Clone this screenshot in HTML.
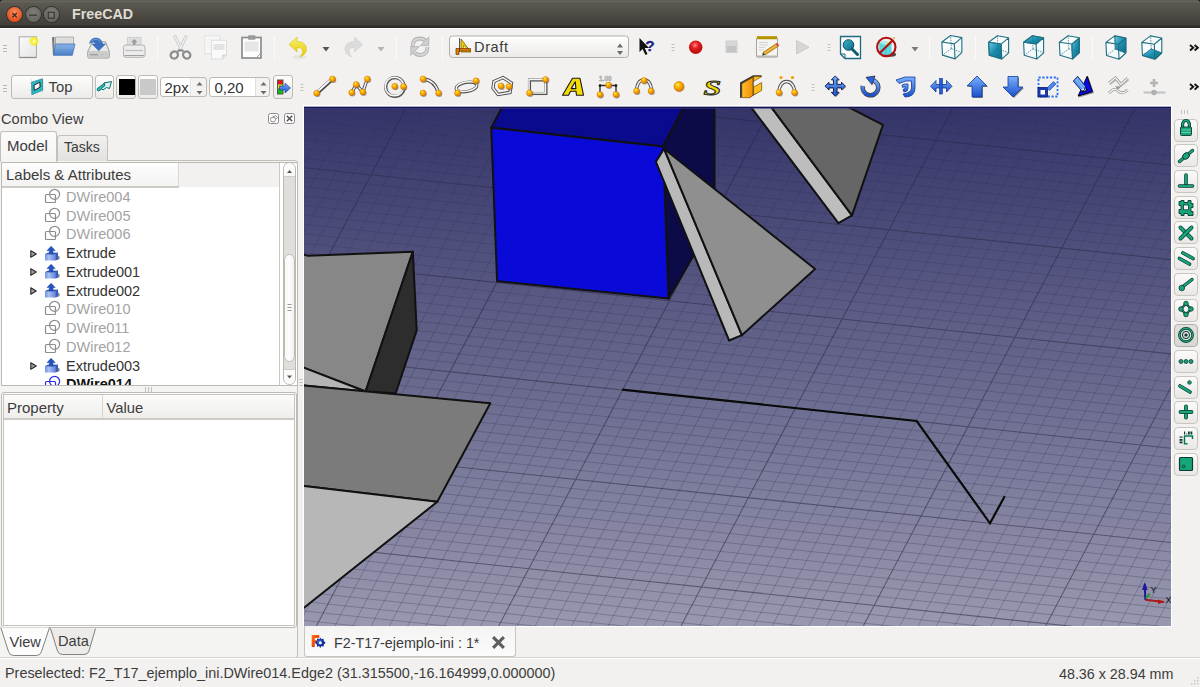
<!DOCTYPE html>
<html><head><meta charset="utf-8">
<style>
*{margin:0;padding:0;box-sizing:border-box}
html,body{width:1200px;height:687px;overflow:hidden;background:#f2f1f0;font-family:"Liberation Sans",sans-serif;color:#3c3c3c}
.a{position:absolute}
#title{left:0;top:0;width:1200px;height:28px;background:linear-gradient(#57554e 0px,#6a675d 1px,#5c5951 3px,#4e4b45 14px,#413f3a 25px,#302e2a 26px,#2c2a27 28px);border-top-left-radius:3px;border-top-right-radius:3px}
#titlewrap{left:0;top:0;width:1200px;height:8px;background:#061436}
.tt{font-weight:bold;font-size:14.3px;color:#dfdbd2;left:72px;top:6px;line-height:16px}
.wbtn{width:16px;height:16px;border-radius:50%;top:6.6px}
#vp{left:304px;top:107px;width:867px;height:519px;overflow:hidden}
.t{position:absolute;white-space:pre;font-size:14.5px;line-height:17px}
.ic{position:absolute;overflow:visible}
.sep{position:absolute;width:1px;background:#d9d6d2;border-right:1px solid #fbfbfa}
.grip{position:absolute;width:4px;height:9px;background:repeating-linear-gradient(#b9b5b0 0 1px,transparent 1px 3px)}
.btn{position:absolute;border:1px solid #bdb9b3;border-radius:3px;background:linear-gradient(#fdfdfc,#ecebe9)}
.gray{color:#9a9a9a}
</style></head><body>
<div class="a" id="titlewrap"></div>
<div class="a" id="title"></div>
<div class="a" style="left:0;top:28px;width:1200px;height:1px;background:#ffffff"></div>
<div class="a wbtn" style="left:7px;width:15.4px;height:15.4px;background:radial-gradient(circle at 50% 35%,#f58a5d,#e5521f 70%,#c8401a);box-shadow:0 0 0 1px #34332f"></div>
<div class="a wbtn" style="left:25.5px;width:15.2px;height:15.2px;background:radial-gradient(circle at 50% 35%,#7f7d77,#605e59);box-shadow:0 0 0 1px #34332f"></div>
<div class="a wbtn" style="left:43.7px;width:15.2px;height:15.2px;background:radial-gradient(circle at 50% 35%,#7f7d77,#605e59);box-shadow:0 0 0 1px #34332f"></div>
<svg class="ic" style="left:0;top:0.6px" width="60" height="28"><path d="M12.4 12l4.4 4.4M16.8 12l-4.4 4.4" stroke="#3a2a22" stroke-width="1.2"/><path d="M29.2 14.2h7.8" stroke="#3d3c38" stroke-width="1.4"/><rect x="48.3" y="11.3" width="6" height="6" fill="none" stroke="#3d3c38" stroke-width="1.3"/></svg>
<div class="a tt">FreeCAD</div>

<!-- row1 -->
<div class="grip" style="left:3px;top:44.5px"></div>
<svg class="ic" style="left:0;top:28px" width="1200" height="40" viewBox="0 28 1200 40">
<defs>
<linearGradient id="pg" x1="0" y1="0" x2="1" y2="1"><stop offset="0" stop-color="#fafafa"/><stop offset="1" stop-color="#e4e4e4"/></linearGradient>
<radialGradient id="yg"><stop offset="0" stop-color="#ffffff"/><stop offset="0.35" stop-color="#fbf54a"/><stop offset="0.7" stop-color="#f2ec10" stop-opacity="0.8"/><stop offset="1" stop-color="#f2ec10" stop-opacity="0"/></radialGradient>
<linearGradient id="bl" x1="0" y1="0" x2="0" y2="1"><stop offset="0" stop-color="#8ab4e6"/><stop offset="1" stop-color="#4a80c8"/></linearGradient>
<linearGradient id="yl" x1="0" y1="0" x2="0" y2="1"><stop offset="0" stop-color="#f8f070"/><stop offset="1" stop-color="#e2c800"/></linearGradient>
<linearGradient id="cb" x1="0" y1="0" x2="0" y2="1"><stop offset="0" stop-color="#ffffff"/><stop offset="1" stop-color="#ebeae8"/></linearGradient>
<radialGradient id="rd" cx="0.45" cy="0.35"><stop offset="0" stop-color="#ff8a8a"/><stop offset="0.5" stop-color="#e82020"/><stop offset="1" stop-color="#c01010"/></radialGradient>
<linearGradient id="tl" x1="0" y1="0" x2="1" y2="1"><stop offset="0" stop-color="#3fb0c8"/><stop offset="1" stop-color="#0c6e88"/></linearGradient>
</defs>
<!-- new -->
<rect x="19.2" y="36.8" width="17.3" height="20.6" fill="url(#pg)" stroke="#a9a9a9" stroke-width="1"/>
<path d="M19.5 57.5h17" stroke="#8c8c8c" stroke-width="1.2"/>
<circle cx="34" cy="41.2" r="5.2" fill="url(#yg)"/>
<!-- open -->
<path d="M52 38.5 Q51.5 37 53 37 L54.5 37 L54.5 55 L53 55.2z" fill="#7a7a7a"/>
<path d="M55.5 37 H73.5 V45 H55.5z" fill="#e9e9e9" stroke="#9a9a9a" stroke-width="0.8"/>
<path d="M56.5 39h16M56.5 41h16M56.5 43h16" stroke="#c4c4c4" stroke-width="0.7"/>
<path d="M55.5 44 H75 L72.3 55.3 H53.5z" fill="url(#bl)" stroke="#3f74b8" stroke-width="0.8"/>
<!-- save -->
<path d="M92.5 41.8 H105.5 L109.3 51.5 V56.8 Q109.3 58 108 58 H89 Q87.8 58 87.8 56.8 V51.5z" fill="#e9e9e9" stroke="#8f8f8f" stroke-width="0.9"/>
<path d="M88.3 51.8h20.5" stroke="#b0b0b0" stroke-width="0.8"/><rect x="88.5" y="52.3" width="20" height="5.2" fill="#c9c9c9"/><path d="M90 54.8h8" stroke="#8a8a8a" stroke-width="0.9"/>
<path d="M89.5 43.5 Q90.5 37.8 96.5 38 Q101.5 38.5 102.5 44 L105.5 44 L98.7 50.8 L92 44 L95.3 44 Q95 42 93.5 42 Q91.5 42 89.5 43.5z" fill="#3b70c2" stroke="#2c5ca8" stroke-width="0.5"/>
<path d="M90.5 42 Q92.5 39.2 96.5 39.3 Q99.5 39.6 100.5 42" stroke="#7aa6e0" stroke-width="0.8" fill="none"/>
<!-- print -->
<rect x="127.5" y="37.3" width="13.5" height="10" fill="#dedede" stroke="#c9c9c9" stroke-width="0.8"/>
<path d="M134.3 39 L137.5 42.3 H135.5 V45.5 H133 V42.3 H131z" fill="#9a9a9a"/>
<rect x="123.5" y="45" width="21.5" height="12.3" rx="2.5" fill="#ececec" stroke="#aaaaaa" stroke-width="0.9"/>
<path d="M125.5 50.5 H143" stroke="#bdbdbd" stroke-width="1.2"/><path d="M124.5 55.5 H144" stroke="#a0a0a0" stroke-width="1"/>
<!-- cut -->
<path d="M175 36.5 L181.8 50.5 M186 36.5 L179.2 50.5" stroke="#c8c8c8" stroke-width="3" stroke-linecap="round"/>
<path d="M175 36.5 L181.8 50.5 M186 36.5 L179.2 50.5" stroke="#f4f4f4" stroke-width="1.4" stroke-linecap="round"/>
<ellipse cx="174.3" cy="55" rx="3.8" ry="3.4" fill="none" stroke="#8c8c8c" stroke-width="2.2" transform="rotate(-35 174.3 55)"/>
<ellipse cx="186.7" cy="55" rx="3.8" ry="3.4" fill="none" stroke="#8c8c8c" stroke-width="2.2" transform="rotate(35 186.7 55)"/>
<path d="M177.5 51.5 Q180.5 48.5 183.5 51.5" stroke="#8c8c8c" stroke-width="2" fill="none"/>
<!-- copy -->
<rect x="204.8" y="35.8" width="15" height="18" fill="#f7f7f7" stroke="#dcdcdc" stroke-width="0.8"/>
<path d="M206.5 40h11M206.5 42.5h11M206.5 45h11M206.5 47.5h11" stroke="#ebebeb" stroke-width="0.8"/>
<path d="M211.5 40.3 H226.5 V55 L222.5 59 H211.5z" fill="#fafafa" stroke="#d7d7d7" stroke-width="0.8"/>
<rect x="213.5" y="44" width="11" height="6" fill="#e3e3e3"/><path d="M222.5 59 V55 H226.5" fill="#e0e0e0" stroke="#cfcfcf" stroke-width="0.7"/>
<!-- paste -->
<rect x="242" y="37.5" width="19" height="20.5" fill="#fdfdfd" stroke="#8c8c8c" stroke-width="1.7"/>
<rect x="248" y="35.3" width="7.5" height="4.5" rx="1" fill="#9a9a9a"/>
<rect x="244.5" y="41.5" width="14" height="10" fill="#e6e6e6"/><path d="M257 57 L260 54" stroke="#9a9a9a" stroke-width="1"/>
<!-- undo -->
<ellipse cx="299.5" cy="57" rx="7" ry="1.8" fill="#d8d8d8" opacity="0.5"/>
<path d="M289 44.5 L297 37 V41.5 Q306 41.5 306.5 49 Q306.5 54 300 57 Q303 53.5 302.5 50.5 Q302 47.5 297 47.5 V52z" fill="url(#yl)" stroke="#d9c40a" stroke-width="0.6"/>
<path d="M322.5 47 H329.5 L326 51.5z" fill="#555555"/>
<!-- redo -->
<path d="M362.5 44.5 L354.5 37 V41.5 Q345.5 41.5 345 49 Q345 54 351.5 57 Q348.5 53.5 349 50.5 Q349.5 47.5 354.5 47.5 V52z" fill="#dcdcdc" stroke="#cccccc" stroke-width="0.6"/>
<path d="M377.5 47 H384.5 L381 51.5z" fill="#b4b4b4"/>
<!-- refresh -->
<path d="M412.5 46.5 Q412.5 38.5 420 38.5 Q423.5 38.5 425.5 41" fill="none" stroke="#b0b0b0" stroke-width="3.8"/>
<path d="M412.5 46.5 Q412.5 38.5 420 38.5 Q423.5 38.5 425.5 41" fill="none" stroke="#d6d6d6" stroke-width="2"/>
<path d="M428.8 36.8 V45.6 H420.3z" fill="#cfcfcf" stroke="#acacac" stroke-width="0.7" stroke-linejoin="round"/>
<path d="M427.5 47 Q427.5 55 420 55 Q416.5 55 414.5 52.5" fill="none" stroke="#b0b0b0" stroke-width="3.8"/>
<path d="M427.5 47 Q427.5 55 420 55 Q416.5 55 414.5 52.5" fill="none" stroke="#d6d6d6" stroke-width="2"/>
<path d="M410.8 55.4 V46.6 H419.3z" fill="#cfcfcf" stroke="#acacac" stroke-width="0.7" stroke-linejoin="round"/>
<!-- combo -->
<rect x="449.5" y="36" width="179" height="21.5" rx="3" fill="url(#cb)" stroke="#b3afa9"/>
<path d="M617 47.5 L620 43.5 L623 47.5z M617 51 L620 55 L623 51z" fill="#6a6a6a"/>
<!-- draft icon -->
<path d="M461 39 V52 H471 z" fill="#f0d000" stroke="#7a6000" stroke-width="0.8"/>
<path d="M463.5 45 V49.5 H467.5z" fill="#f4f2e8" stroke="#7a6000" stroke-width="0.5"/>
<path d="M456 48.5 H470.5 V51 H459 V54.5 H456z" fill="#e87a00" stroke="#6a3800" stroke-width="0.7"/>
<path d="M459.5 38 V52" stroke="#333" stroke-width="0.8"/>
<!-- whats this -->
<path d="M639.5 38 V52 L642.5 49 L645.5 55 L647.5 54 L644.7 48 H649z" fill="#111"/>
<text x="645.3" y="50.5" font-family="Liberation Sans" font-weight="bold" font-size="15.5" fill="#1c2480" stroke="#1c2480" stroke-width="0.3">?</text>
<path d="M671.5 44.5h3M671.5 47.5h3M671.5 50.5h3" stroke="#c4c0bb" stroke-width="1"/>
<!-- macro rec -->
<circle cx="695.7" cy="47.2" r="6.7" fill="url(#rd)"/>
<rect x="726" y="41" width="11" height="11.5" fill="#d8d8d8" stroke="#c6c6c6" stroke-width="0.8"/><rect x="727" y="46" width="9" height="6" fill="#c4c4c4"/>
<!-- macro edit -->
<rect x="756.5" y="37.5" width="21" height="19.5" rx="1" fill="#f6f6f0" stroke="#9b9b9b" stroke-width="0.9"/>
<rect x="757" y="36.2" width="20" height="3" fill="#c8a400"/><path d="M758 36.2v3M760 36.2v3M762 36.2v3M764 36.2v3M766 36.2v3M768 36.2v3M770 36.2v3M772 36.2v3M774 36.2v3M776 36.2v3" stroke="#8a7000" stroke-width="0.6"/>
<path d="M759 42.5h9M759 45h9M759 47.5h6M759 50h5" stroke="#c8c8c8" stroke-width="0.8"/>
<path d="M763 52.5 L776.5 43.5 L778.5 46 L765 55z" fill="#f0b030" stroke="#6a4a00" stroke-width="0.6"/><path d="M763 52.5 L762 56 L765 55z" fill="#333"/><path d="M776.5 43.5 L778.5 46" stroke="#e04040" stroke-width="2"/>
<rect x="756.5" y="55.5" width="21" height="2" fill="#b8b8b8"/>
<!-- play -->
<path d="M796.5 40.5 V54 L809 47.2z" fill="#d6d6d6" stroke="#c4c4c4" stroke-width="0.8"/>
<path d="M827.5 44.5h3M827.5 47.5h3M827.5 50.5h3" stroke="#c4c0bb" stroke-width="1"/>
<!-- fit all -->
<path d="M840.5 36.5 H860.5 V58.5 H845 L840.5 54z" fill="#fbfbfb" stroke="#1d6b80" stroke-width="1.3"/>
<path d="M845 58.5 V54 H840.5" fill="none" stroke="#1d6b80" stroke-width="1"/>
<circle cx="848.5" cy="45" r="5.3" fill="url(#tl)" stroke="#0e4f60" stroke-width="1"/>
<path d="M852 49 L857.5 54.5" stroke="#0e5a70" stroke-width="3" stroke-linecap="round"/>
<!-- no draw -->
<ellipse cx="891" cy="54.5" rx="5" ry="2.2" fill="#222" opacity="0.8"/>
<path d="M879 43 L884 41 L891.5 43 V54.5 L885 56.5 L879.5 52z" fill="#5ad8e0"/>
<path d="M879 43 L884 41 L891.5 43 L886 45z" fill="#a8eef0"/><path d="M886 45 V56.5" stroke="#3ab8c4" stroke-width="0.6"/>
<path d="M885.5 46.5 L892.3 40.2" stroke="#f0d000" stroke-width="1.8"/><circle cx="894.2" cy="37.9" r="0.9" fill="#e0a040"/>
<circle cx="886.3" cy="46.9" r="9.2" fill="none" stroke="#b01010" stroke-width="2.1"/>
<path d="M879.8 53 L892.6 40.6" stroke="#b01010" stroke-width="2.1"/>
<path d="M911.5 47 H918.5 L915 51.5z" fill="#7a7a7a"/>
<defs><linearGradient id="cf" x1="0" y1="0" x2="1" y2="1"><stop offset="0" stop-color="#6ccbe4"/><stop offset="0.5" stop-color="#1b8fae"/><stop offset="1" stop-color="#0b6d88"/></linearGradient><linearGradient id="cw" x1="0" y1="0" x2="1" y2="1"><stop offset="0" stop-color="#ffffff"/><stop offset="1" stop-color="#eef6f8"/></linearGradient></defs>
<path d="M941.85 42.00 L950.65 35.50 L961.85 37.60 L961.85 52.60 L955.00 58.85 L942.50 55.10 z" fill="url(#cw)"/>
<path d="M951.30 48.60 L950.65 35.50 M951.30 48.60 L942.50 55.10 M951.30 48.60 L961.85 52.60" stroke="#1f6f80" stroke-width="0.7" stroke-dasharray="1.5 1" fill="none"/>
<path d="M941.85 42.00 L954.35 43.85 L961.85 37.60 L950.65 35.50 z M941.85 42.00 L942.50 55.10 L955.00 58.85 L961.85 52.60 M954.35 43.85 L955.00 58.85 M961.85 37.60 L961.85 52.60" stroke="#1f6f80" stroke-width="1.1" fill="none" stroke-linejoin="round"/>
<path d="M988.60 42.20 L997.40 35.70 L1008.60 37.80 L1008.60 52.80 L1001.75 59.05 L989.25 55.30 z" fill="url(#cw)"/>
<path d="M988.60 42.20 L1001.10 44.05 L1001.75 59.05 L989.25 55.30 z" fill="url(#cf)" stroke="#1f6f80" stroke-width="0.8"/>
<path d="M998.05 48.80 L997.40 35.70 M998.05 48.80 L989.25 55.30 M998.05 48.80 L1008.60 52.80" stroke="#1f6f80" stroke-width="0.7" stroke-dasharray="1.5 1" fill="none"/>
<path d="M988.60 42.20 L1001.10 44.05 L1008.60 37.80 L997.40 35.70 z M988.60 42.20 L989.25 55.30 L1001.75 59.05 L1008.60 52.80 M1001.10 44.05 L1001.75 59.05 M1008.60 37.80 L1008.60 52.80" stroke="#1f6f80" stroke-width="1.1" fill="none" stroke-linejoin="round"/>
<path d="M1023.60 42.20 L1032.40 35.70 L1043.60 37.80 L1043.60 52.80 L1036.75 59.05 L1024.25 55.30 z" fill="url(#cw)"/>
<path d="M1023.60 42.20 L1036.10 44.05 L1043.60 37.80 L1032.40 35.70 z" fill="url(#cf)" stroke="#1f6f80" stroke-width="0.8"/>
<path d="M1033.05 48.80 L1032.40 35.70 M1033.05 48.80 L1024.25 55.30 M1033.05 48.80 L1043.60 52.80" stroke="#1f6f80" stroke-width="0.7" stroke-dasharray="1.5 1" fill="none"/>
<path d="M1023.60 42.20 L1036.10 44.05 L1043.60 37.80 L1032.40 35.70 z M1023.60 42.20 L1024.25 55.30 L1036.75 59.05 L1043.60 52.80 M1036.10 44.05 L1036.75 59.05 M1043.60 37.80 L1043.60 52.80" stroke="#1f6f80" stroke-width="1.1" fill="none" stroke-linejoin="round"/>
<path d="M1059.35 42.20 L1068.15 35.70 L1079.35 37.80 L1079.35 52.80 L1072.50 59.05 L1060.00 55.30 z" fill="url(#cw)"/>
<path d="M1071.85 44.05 L1079.35 37.80 L1079.35 52.80 L1072.50 59.05 z" fill="url(#cf)" stroke="#1f6f80" stroke-width="0.8"/>
<path d="M1068.80 48.80 L1068.15 35.70 M1068.80 48.80 L1060.00 55.30 M1068.80 48.80 L1079.35 52.80" stroke="#1f6f80" stroke-width="0.7" stroke-dasharray="1.5 1" fill="none"/>
<path d="M1059.35 42.20 L1071.85 44.05 L1079.35 37.80 L1068.15 35.70 z M1059.35 42.20 L1060.00 55.30 L1072.50 59.05 L1079.35 52.80 M1071.85 44.05 L1072.50 59.05 M1079.35 37.80 L1079.35 52.80" stroke="#1f6f80" stroke-width="1.1" fill="none" stroke-linejoin="round"/>
<path d="M1105.90 42.40 L1114.70 35.90 L1125.90 38.00 L1125.90 53.00 L1119.05 59.25 L1106.55 55.50 z" fill="url(#cw)"/>
<path d="M1114.70 35.90 L1125.90 38.00 L1125.90 53.00 L1115.35 49.00 z" fill="url(#cf)" stroke="#1f6f80" stroke-width="0.8"/>
<path d="M1115.35 49.00 L1114.70 35.90 M1115.35 49.00 L1106.55 55.50 M1115.35 49.00 L1125.90 53.00" stroke="#1f6f80" stroke-width="0.7" stroke-dasharray="1.5 1" fill="none"/>
<path d="M1105.90 42.40 L1118.40 44.25 L1125.90 38.00 L1114.70 35.90 z M1105.90 42.40 L1106.55 55.50 L1119.05 59.25 L1125.90 53.00 M1118.40 44.25 L1119.05 59.25 M1125.90 38.00 L1125.90 53.00" stroke="#1f6f80" stroke-width="1.1" fill="none" stroke-linejoin="round"/>
<path d="M1141.80 42.40 L1150.60 35.90 L1161.80 38.00 L1161.80 53.00 L1154.95 59.25 L1142.45 55.50 z" fill="url(#cw)"/>
<path d="M1142.45 55.50 L1154.95 59.25 L1161.80 53.00 L1151.25 49.00 z" fill="url(#cf)" stroke="#1f6f80" stroke-width="0.8"/>
<path d="M1151.25 49.00 L1150.60 35.90 M1151.25 49.00 L1142.45 55.50 M1151.25 49.00 L1161.80 53.00" stroke="#1f6f80" stroke-width="0.7" stroke-dasharray="1.5 1" fill="none"/>
<path d="M1141.80 42.40 L1154.30 44.25 L1161.80 38.00 L1150.60 35.90 z M1141.80 42.40 L1142.45 55.50 L1154.95 59.25 L1161.80 53.00 M1154.30 44.25 L1154.95 59.25 M1161.80 38.00 L1161.80 53.00" stroke="#1f6f80" stroke-width="1.1" fill="none" stroke-linejoin="round"/>
<path d="M1190 45.1 L1193.2 47.8 L1190 50.5 M1194.6 45.1 L1197.8 47.8 L1194.6 50.5" stroke="#111" stroke-width="1.9" fill="none"/>
</svg>
<div class="sep" style="left:157px;top:36px;height:23px"></div>
<div class="sep" style="left:274px;top:36px;height:23px"></div>
<div class="sep" style="left:396px;top:36px;height:23px"></div>
<div class="sep" style="left:442px;top:36px;height:23px"></div>
<div class="sep" style="left:929px;top:36px;height:23px"></div>
<div class="sep" style="left:975px;top:36px;height:23px"></div>
<div class="sep" style="left:1092px;top:36px;height:23px"></div>
<div class="t" style="left:474px;top:39px;font-size:14.6px;letter-spacing:0.6px;color:#3c3c3c">Draft</div>
<!-- row2 -->
<div class="grip" style="left:3px;top:84.5px"></div>
<div class="btn" style="left:11px;top:75px;width:82px;height:24px"></div>
<div class="t" style="left:48.5px;top:78.5px;font-size:14.8px">Top</div>
<div class="btn" style="left:95px;top:75px;width:19px;height:24px"></div>
<div class="btn" style="left:116px;top:75px;width:20px;height:24px"></div>
<div class="a" style="left:118.5px;top:79px;width:16px;height:16px;background:#000"></div>
<div class="btn" style="left:138px;top:75px;width:20px;height:24px"></div>
<div class="a" style="left:140px;top:79px;width:16px;height:16px;background:#c9c9c9"></div>
<div class="a" style="left:160px;top:77px;width:47px;height:20px;border:1px solid #bdb9b3;border-radius:3px;background:linear-gradient(90deg,#fff 0,#fff 30px,#f3f2f1 31px)"></div>
<div class="a" style="left:190px;top:78px;width:1px;height:18px;background:#e3e1de"></div>
<div class="t" style="left:164.5px;top:79px;font-size:15px;color:#333">2px</div>
<div class="a" style="left:209px;top:77px;width:61px;height:20px;border:1px solid #bdb9b3;border-radius:3px;background:linear-gradient(90deg,#fff 0,#fff 45px,#f3f2f1 46px)"></div>
<div class="a" style="left:255px;top:78px;width:1px;height:18px;background:#e3e1de"></div>
<div class="t" style="left:214.5px;top:79px;font-size:15px;color:#333">0,20</div>
<div class="btn" style="left:273px;top:75px;width:20px;height:24px"></div>
<svg class="ic" style="left:0;top:68px" width="1200" height="40" viewBox="0 68 1200 40">
<defs>
<radialGradient id="od" cx="0.38" cy="0.32" r="0.7"><stop offset="0" stop-color="#fff2b0"/><stop offset="0.25" stop-color="#ffc400"/><stop offset="1" stop-color="#e07800"/></radialGradient>
<linearGradient id="ab" x1="0" y1="0" x2="0" y2="1"><stop offset="0" stop-color="#7ab0ff"/><stop offset="1" stop-color="#1a50c8"/></linearGradient>
<linearGradient id="og" x1="0" y1="0" x2="1" y2="0"><stop offset="0" stop-color="#ffbb30"/><stop offset="1" stop-color="#f09000"/></linearGradient>

</defs>
<path d="M196.5 85.5 L199.5 82 L202.5 85.5z M196.5 91 L199.5 94.5 L202.5 91z" fill="#6a6a6a"/>
<path d="M260.5 85.5 L263.5 82 L266.5 85.5z M260.5 91 L263.5 94.5 L266.5 91z" fill="#6a6a6a"/>
<!-- top view icon -->
<path d="M31.5 79v16M42.5 79v14M29 83h15M29 90h15" stroke="#c6d6d8" stroke-width="0.6"/>
<path d="M31.6 82.2 L42.6 78.8 L42.6 90.3 L31.9 94.6z M34 85.3 L39.8 82.1 L40.1 87.2 L34.3 90.4z" fill-rule="evenodd" fill="#2ab8c4" stroke="#1a7e8a" stroke-width="0.7"/>
<path d="M34 85.3 L39.8 82.1 L40.1 87.2 L34.3 90.4z" fill="#f6f6f6" stroke="#111" stroke-width="0.9"/>
<!-- construction -->
<path d="M98.5 89.5 L105 84.5" stroke="#0a7a7a" stroke-width="3.6" stroke-linecap="round"/>
<path d="M98.5 89.5 L105 84.5" stroke="#2ec0b8" stroke-width="1.8" stroke-linecap="round"/>
<path d="M104 83 L111.5 81.5 L109.5 88.5 L106.5 87.5 L103 90 L101.5 88.5 L105 85.5z" fill="#d8f4f0" stroke="#0a6a6a" stroke-width="1"/>
<!-- apply style -->
<rect x="277" y="79.5" width="6.5" height="15" fill="#555"/>
<rect x="278" y="80.5" width="4.5" height="3.5" fill="#f01010"/><rect x="278" y="84.5" width="4.5" height="4" fill="#f0e000"/><rect x="278" y="89" width="4.5" height="4.5" fill="#10c010"/>
<path d="M279.5 86 H285 V83 L290.5 88 L285 93 V90 H279.5z" fill="url(#ab)" stroke="#1a3a90" stroke-width="0.6"/>
<path d="M300.5 84.5h3M300.5 87.5h3M300.5 90.5h3" stroke="#c4c0bb" stroke-width="1"/>
<!-- line -->
<path d="M317 93 L332.5 79" stroke="#4a4a4a" stroke-width="3.8"/><path d="M316.5 92.5 L332 78.5" stroke="#fafafa" stroke-width="1.8"/>
<circle cx="317.5" cy="94.1" r="3" fill="#555" opacity="0.55"/><circle cx="316.7" cy="93.2" r="3" fill="url(#od)" stroke="#c87000" stroke-width="0.4"/><circle cx="333.3" cy="79.9" r="3" fill="#555" opacity="0.55"/><circle cx="332.5" cy="79.0" r="3" fill="url(#od)" stroke="#c87000" stroke-width="0.4"/>
<!-- wire -->
<path d="M351.7 92.5 L356.2 84.5 L362.8 92 L367.3 79" stroke="#4a4a4a" stroke-width="3.3" fill="none"/><path d="M351.7 92.5 L356.2 84.5 L362.8 92 L367.3 79" stroke="#f6f6f6" stroke-width="1.5" fill="none"/>
<circle cx="352.5" cy="93.4" r="3" fill="#555" opacity="0.55"/><circle cx="351.7" cy="92.5" r="3" fill="url(#od)" stroke="#c87000" stroke-width="0.4"/><circle cx="357.0" cy="85.4" r="3" fill="#555" opacity="0.55"/><circle cx="356.2" cy="84.5" r="3" fill="url(#od)" stroke="#c87000" stroke-width="0.4"/><circle cx="363.6" cy="92.9" r="3" fill="#555" opacity="0.55"/><circle cx="362.8" cy="92.0" r="3" fill="url(#od)" stroke="#c87000" stroke-width="0.4"/><circle cx="368.1" cy="79.9" r="3" fill="#555" opacity="0.55"/><circle cx="367.3" cy="79.0" r="3" fill="url(#od)" stroke="#c87000" stroke-width="0.4"/>
<!-- circle -->
<circle cx="395" cy="87" r="9.3" fill="none" stroke="#555" stroke-width="3.2"/><circle cx="394.5" cy="86.5" r="9.3" fill="none" stroke="#fafafa" stroke-width="1.6"/>
<circle cx="395.5" cy="87.2" r="3" fill="#555" opacity="0.55"/><circle cx="394.7" cy="86.3" r="3" fill="url(#od)" stroke="#c87000" stroke-width="0.4"/><circle cx="404.3" cy="87.4" r="3" fill="#555" opacity="0.55"/><circle cx="403.5" cy="86.5" r="3" fill="url(#od)" stroke="#c87000" stroke-width="0.4"/>
<!-- arc -->
<path d="M423 79 Q435 80 438.5 93" stroke="#4a4a4a" stroke-width="3.3" fill="none"/><path d="M423 79 Q435 80 438.5 93" stroke="#f6f6f6" stroke-width="1.5" fill="none"/>
<circle cx="423.8" cy="79.9" r="3" fill="#555" opacity="0.55"/><circle cx="423.0" cy="79.0" r="3" fill="url(#od)" stroke="#c87000" stroke-width="0.4"/><circle cx="423.8" cy="93.9" r="3" fill="#555" opacity="0.55"/><circle cx="423.0" cy="93.0" r="3" fill="url(#od)" stroke="#c87000" stroke-width="0.4"/><circle cx="439.3" cy="93.9" r="3" fill="#555" opacity="0.55"/><circle cx="438.5" cy="93.0" r="3" fill="url(#od)" stroke="#c87000" stroke-width="0.4"/>
<!-- ellipse -->
<ellipse cx="466.5" cy="87" rx="10.5" ry="4.6" fill="none" stroke="#555" stroke-width="3.1" transform="rotate(-10 466.5 87)"/><ellipse cx="466.5" cy="86.6" rx="10.5" ry="4.6" fill="none" stroke="#fafafa" stroke-width="1.5" transform="rotate(-10 466.5 86.6)"/>
<circle cx="476.8" cy="81.7" r="3" fill="#555" opacity="0.55"/><circle cx="476.0" cy="80.8" r="3" fill="url(#od)" stroke="#c87000" stroke-width="0.4"/><circle cx="458.3" cy="93.9" r="3" fill="#555" opacity="0.55"/><circle cx="457.5" cy="93.0" r="3" fill="url(#od)" stroke="#c87000" stroke-width="0.4"/>
<!-- polygon -->
<path d="M494 81.5 L503 77.5 L511.5 83 L510 92.5 L498 94.5 L493 88z" fill="none" stroke="#4a4a4a" stroke-width="3.3"/><path d="M494 81.5 L503 77.5 L511.5 83 L510 92.5 L498 94.5 L493 88z" fill="none" stroke="#f6f6f6" stroke-width="1.5"/>
<circle cx="501.8" cy="86.9" r="3" fill="#555" opacity="0.55"/><circle cx="501.0" cy="86.0" r="3" fill="url(#od)" stroke="#c87000" stroke-width="0.4"/><circle cx="509.8" cy="87.4" r="3" fill="#555" opacity="0.55"/><circle cx="509.0" cy="86.5" r="3" fill="url(#od)" stroke="#c87000" stroke-width="0.4"/>
<!-- rectangle -->
<rect x="529.5" y="80" width="16.5" height="13.5" fill="none" stroke="#555" stroke-width="3.1"/><rect x="529" y="79.5" width="16.5" height="13.5" fill="none" stroke="#f6f6f6" stroke-width="1.5"/>
<circle cx="546.3" cy="80.4" r="3" fill="#555" opacity="0.55"/><circle cx="545.5" cy="79.5" r="3" fill="url(#od)" stroke="#c87000" stroke-width="0.4"/><circle cx="530.3" cy="93.9" r="3" fill="#555" opacity="0.55"/><circle cx="529.5" cy="93.0" r="3" fill="url(#od)" stroke="#c87000" stroke-width="0.4"/>
<!-- text A -->
<path d="M562.5 95.2 L572.5 78.3 H580 L583.5 95.2 H576.5 L576 91.2 H570.5 L568.5 95.2z M571.2 88.6 L575.3 81.8 L575.9 88.6z" fill-rule="evenodd" fill="#f6dc00" stroke="#1a1a1a" stroke-width="1.1" stroke-linejoin="round"/>
<!-- dimension -->
<text x="599" y="80.5" font-family="Liberation Sans" font-weight="bold" font-size="6.5" fill="#fff" stroke="#999" stroke-width="0.5">1.00</text>
<path d="M600 85.5 H616 M600 85.5 V94 M616 85.5 V94" stroke="#333" stroke-width="1.4" fill="none"/>
<circle cx="600" cy="85.5" r="1.3" fill="#111"/><circle cx="616" cy="85.5" r="1.3" fill="#111"/>
<circle cx="609.3" cy="85.9" r="3" fill="#555" opacity="0.55"/><circle cx="608.5" cy="85.0" r="3" fill="url(#od)" stroke="#c87000" stroke-width="0.4"/><circle cx="600.8" cy="95.4" r="3" fill="#555" opacity="0.55"/><circle cx="600.0" cy="94.5" r="3" fill="url(#od)" stroke="#c87000" stroke-width="0.4"/><circle cx="616.8" cy="95.4" r="3" fill="#555" opacity="0.55"/><circle cx="616.0" cy="94.5" r="3" fill="url(#od)" stroke="#c87000" stroke-width="0.4"/>
<!-- bspline -->
<path d="M636.5 91 Q637 80 644 80 Q651 80 651.5 91" stroke="#555" stroke-width="3.3" fill="none"/><path d="M636.5 91 Q637 80 644 80 Q651 80 651.5 91" stroke="#f6f6f6" stroke-width="1.5" fill="none"/>
<circle cx="644.8" cy="81.4" r="3" fill="#555" opacity="0.55"/><circle cx="644.0" cy="80.5" r="3" fill="url(#od)" stroke="#c87000" stroke-width="0.4"/><circle cx="637.3" cy="91.9" r="3" fill="#555" opacity="0.55"/><circle cx="636.5" cy="91.0" r="3" fill="url(#od)" stroke="#c87000" stroke-width="0.4"/><circle cx="651.8" cy="91.9" r="3" fill="#555" opacity="0.55"/><circle cx="651.0" cy="91.0" r="3" fill="url(#od)" stroke="#c87000" stroke-width="0.4"/>
<!-- point -->
<circle cx="679.5" cy="87" r="5" fill="#666" opacity="0.5"/><circle cx="679" cy="86.5" r="5" fill="url(#od)" stroke="#c87000" stroke-width="0.5"/>
<!-- shapestring S -->
<text transform="translate(703.5,95) scale(1.45,1)" font-family="Liberation Serif" font-weight="bold" font-style="italic" font-size="22" fill="#f2da00" stroke="#2a2a2a" stroke-width="0.9" stroke-linejoin="round">S</text>
<!-- facebinder -->
<path d="M740 82.6 L753.1 75.3 H761.7 L761.7 76.5 L753.6 81 V87 L761.7 82.6 V90.4 L749.9 97.7 H740z" fill="#3a3a3a"/>
<path d="M741.9 83.8 L752.9 77.3 V94.9 L749.9 97.7 H741.9z" fill="url(#og)" stroke="#6a4200" stroke-width="0.5"/>
<path d="M753.6 76.6 H761.7 L753.6 81.4z" fill="#ffc020" stroke="#6a4200" stroke-width="0.5"/>
<path d="M753.6 87.1 L761.7 82.6 V90.4 L753.6 94.9z" fill="#ffc020" stroke="#6a4200" stroke-width="0.5"/>
<!-- bezier -->
<path d="M778.5 93 Q780 81.5 786.5 81.5 Q793.5 81.5 795 93" stroke="#4a4a4a" stroke-width="3.3" fill="none"/><path d="M778.5 93 Q780 81.5 786.5 81.5 Q793.5 81.5 795 93" stroke="#f6f6f6" stroke-width="1.5" fill="none"/>
<circle cx="781" cy="77.5" r="1.6" fill="#f0a000"/><circle cx="792.5" cy="77.5" r="1.6" fill="#f0a000"/>
<circle cx="779.8" cy="93.4" r="3" fill="#555" opacity="0.55"/><circle cx="779.0" cy="92.5" r="3" fill="url(#od)" stroke="#c87000" stroke-width="0.4"/><circle cx="795.3" cy="93.4" r="3" fill="#555" opacity="0.55"/><circle cx="794.5" cy="92.5" r="3" fill="url(#od)" stroke="#c87000" stroke-width="0.4"/>
<path d="M811.5 84.5h3M811.5 87.5h3M811.5 90.5h3" stroke="#c4c0bb" stroke-width="1"/>
<!-- move -->
<path d="M835.2 75.9 L839.1 79.8 L836.9 79.8 L836.9 84.4 L841.5 84.4 L841.5 82.2 L845.4 86.1 L841.5 90.0 L841.5 87.8 L836.9 87.8 L836.9 92.4 L839.1 92.4 L835.2 96.3 L831.3 92.4 L833.5 92.4 L833.5 87.8 L828.9 87.8 L828.9 90.0 L825.0 86.1 L828.9 82.2 L828.9 84.4 L833.5 84.4 L833.5 79.8 L831.3 79.8z" fill="#333" opacity="0.4" transform="translate(0.8,0.8)"/><path d="M835.2 75.9 L839.1 79.8 L836.9 79.8 L836.9 84.4 L841.5 84.4 L841.5 82.2 L845.4 86.1 L841.5 90.0 L841.5 87.8 L836.9 87.8 L836.9 92.4 L839.1 92.4 L835.2 96.3 L831.3 92.4 L833.5 92.4 L833.5 87.8 L828.9 87.8 L828.9 90.0 L825.0 86.1 L828.9 82.2 L828.9 84.4 L833.5 84.4 L833.5 79.8 L831.3 79.8z" fill="url(#ab)" stroke="#0a1a50" stroke-width="0.9" stroke-linejoin="miter"/>
<!-- rotate -->
<path d="M862.8 86 A7.8 7.8 0 1 0 873.5 80.3" fill="none" stroke="#222" stroke-width="4.6" opacity="0.85"/>
<path d="M862.8 86 A7.8 7.8 0 1 0 873.5 80.3" fill="none" stroke="url(#ab)" stroke-width="3"/>
<path d="M866 77.3 L875 76 L872 84.8z" fill="#2a62e0" stroke="#111" stroke-width="0.6" stroke-linejoin="round"/>
<!-- offset -->
<path d="M896 80 L905 77 H915 V88.5 Q914.5 97 905 97 L903 94 Q911 93 911.5 88 V81 H906 L899 83.5z" fill="url(#ab)" stroke="#103a9a" stroke-width="0.8"/>
<path d="M902 85 Q905 83.5 908 84 V88.5 Q908 91.5 904 92 L903 89.5 Q905 89 905 87.5 V86.5 L902.5 87.5z" fill="url(#ab)" stroke="#103a9a" stroke-width="0.8"/>
<!-- trimex -->
<path d="M930.5 86.3 L936 80.5 V84.5 H946.5 V80.5 L952 86.3 L946.5 92 V88 H936 V92z" fill="url(#ab)" stroke="#103a9a" stroke-width="0.8"/>
<rect x="939.5" y="78.5" width="3" height="15.5" fill="#2a5ad0" stroke="#103a9a" stroke-width="0.6"/>
<!-- upgrade -->
<path d="M977 76 L987 86 H982 V97 H972 V86 H967z" fill="#333" opacity="0.55" transform="translate(1,1)"/>
<path d="M977 76 L987 86 H982 V97 H972 V86 H967z" fill="url(#ab)" stroke="#103a9a" stroke-width="0.8"/>
<!-- downgrade -->
<path d="M1013 97 L1023 87 H1018 V76.5 H1008 V87 H1003z" fill="#333" opacity="0.55" transform="translate(1,1)"/>
<path d="M1013 97 L1023 87 H1018 V76.5 H1008 V87 H1003z" fill="url(#ab)" stroke="#103a9a" stroke-width="0.8"/>
<!-- scale -->
<rect x="1038.5" y="77.5" width="19" height="19" fill="none" stroke="#2a70f0" stroke-width="1.8" stroke-dasharray="2.2 1.6"/>
<rect x="1038" y="87.5" width="9.5" height="9.5" fill="#1a3ab0" stroke="#0a1a70" stroke-width="0.8"/><rect x="1040.5" y="90" width="4.5" height="4.5" fill="#fff"/>
<path d="M1047 88 L1053.5 81.5 L1056 84 L1049.5 90.5z" fill="#4a8af0" stroke="#103a9a" stroke-width="0.6"/>
<!-- draft2sketch -->
<path d="M1087.2 76.3 L1092.8 92 L1078.1 96.3z" fill="#0a0ae8" stroke="#000" stroke-width="1.1" stroke-linejoin="round" transform="translate(0.6,0.6)" opacity="0.35"/>
<path d="M1087.2 76.3 L1092.5 91.7 L1078.1 96z M1085 86 L1087 90.5 L1082.5 92z" fill-rule="evenodd" fill="#0a0ae8" stroke="#000" stroke-width="1" stroke-linejoin="round"/>
<path d="M1073.3 81.1 L1077.6 76.3 L1085.6 86.4 L1084 90.1 L1081.3 90.5z" fill="#5a9af0" stroke="#0a1a60" stroke-width="0.9" stroke-linejoin="round"/>
<path d="M1075.5 79 L1083 88.3 M1076.8 77.8 L1084.5 87.2" stroke="#a8d0ff" stroke-width="0.7"/>
<path d="M1081.3 90.5 L1084 90.1 L1083.3 88z" fill="#fff"/>
<!-- array gray -->
<path d="M1109 83.2 L1115.5 77.9 L1120.8 84.3 L1127.7 78.4" stroke="#a8a8a8" stroke-width="3.2" fill="none" stroke-linejoin="miter" transform="translate(0.5,0.8)" opacity="0.6"/>
<path d="M1109 83.2 L1115.5 77.9 L1120.8 84.3 L1127.7 78.4" stroke="#9c9c9c" stroke-width="2.8" fill="none" stroke-linejoin="miter"/>
<path d="M1109 83.2 L1115.5 77.9 L1120.8 84.3 L1127.7 78.4" stroke="#f6f6f6" stroke-width="1.2" fill="none" stroke-linejoin="miter"/>
<path d="M1109 93.3 Q1113.5 87 1118 91 Q1122.5 95 1127.7 90.1" stroke="#9c9c9c" stroke-width="2.8" fill="none"/>
<path d="M1109 93.3 Q1113.5 87 1118 91 Q1122.5 95 1127.7 90.1" stroke="#f6f6f6" stroke-width="1.2" fill="none"/>
<path d="M1115 86.3 H1121.3 L1118 89.8z" fill="#9a9a9a"/>
<!-- add point gray -->
<path d="M1154 79 V87 M1150 83 H1158" stroke="#b4b4b4" stroke-width="2.6"/>
<path d="M1143.5 92.5 H1165.5" stroke="#c4c4c4" stroke-width="2.2"/>
<circle cx="1154" cy="92.5" r="2.8" fill="#b0b0b0"/>
<!-- chevrons -->
<path d="M1190 84 L1193.2 86.8 L1190 89.6 M1194.6 84 L1197.8 86.8 L1194.6 89.6" stroke="#111" stroke-width="1.9" fill="none"/>
</svg>


<!-- left panel -->
<div class="t" style="left:1px;top:111px;font-size:14.6px">Combo View</div>
<svg class="ic" style="left:266px;top:111px" width="32" height="16"><rect x="2.5" y="2.5" width="10" height="10" rx="2" fill="#fff" stroke="#8a8a8a"/><circle cx="7" cy="8.5" r="2.5" fill="none" stroke="#8a8a8a"/><path d="M6.5 6.5l3-2 2 2-2 2" fill="none" stroke="#8a8a8a"/><rect x="18.5" y="2.5" width="10" height="10" rx="2" fill="#fff" stroke="#8a8a8a"/><path d="M20.8 4.8l5.4 5.4M26.2 4.8l-5.4 5.4" stroke="#555" stroke-width="1.6"/></svg>
<!-- pane frame -->
<div class="a" style="left:-1px;top:160px;width:299px;height:498px;border:1px solid #c2beb8;border-radius:0 3px 3px 0;background:#f4f4f3"></div>
<!-- tabs -->
<div class="a" style="left:57px;top:135px;width:51px;height:26px;border:1px solid #c3bfb9;border-bottom:none;border-radius:3px 3px 0 0;background:linear-gradient(#f1f0ee,#e3e1de)"></div>
<div class="a" style="left:0;top:131px;width:57px;height:31px;border:1px solid #c3bfb9;border-bottom:none;border-radius:3px 3px 0 0;background:linear-gradient(#fbfbfa,#f4f4f3)"></div>
<div class="t" style="left:7px;top:137px;font-size:15px">Model</div>
<div class="t" style="left:64px;top:139px;font-size:14px">Tasks</div>
<!-- tree -->
<div class="a" style="left:1px;top:162px;width:297px;height:224px;border:1px solid #bdb9b3;border-radius:0 2px 0 0;background:#fff"></div>
<div class="a" style="left:2px;top:163px;width:177px;height:24px;background:linear-gradient(#fdfdfd,#f3f2f1);border-right:1px solid #dcd9d5"></div>
<div class="a" style="left:179px;top:163px;width:100px;height:24px;background:#f2f1f0"></div><div class="a" style="left:279px;top:163px;width:1px;height:222px;background:#cdc9c4"></div>
<div class="a" style="left:2px;top:186px;width:177px;height:2px;background:#cdc9c4"></div>
<div class="t" style="left:6px;top:166px;font-size:15px">Labels &amp; Attributes</div>
<div class="a" style="left:2px;top:188px;width:280px;height:197px;overflow:hidden">
<div class="t" style="left:64px;top:1.0px;color:#a3a3a3;font-weight:normal;font-size:14.5px">DWire004</div>
<svg class="ic" style="left:42px;top:0.0px" width="16" height="16"><rect x="1.5" y="6.5" width="10" height="8" rx="1" fill="#fff" stroke="#8c8c8c" stroke-width="1.2"/><circle cx="10.6" cy="6.3" r="5" fill="none" stroke="#8c8c8c" stroke-width="1.2"/></svg>
<div class="t" style="left:64px;top:19.7px;color:#a3a3a3;font-weight:normal;font-size:14.5px">DWire005</div>
<svg class="ic" style="left:42px;top:18.7px" width="16" height="16"><rect x="1.5" y="6.5" width="10" height="8" rx="1" fill="#fff" stroke="#8c8c8c" stroke-width="1.2"/><circle cx="10.6" cy="6.3" r="5" fill="none" stroke="#8c8c8c" stroke-width="1.2"/></svg>
<div class="t" style="left:64px;top:38.4px;color:#a3a3a3;font-weight:normal;font-size:14.5px">DWire006</div>
<svg class="ic" style="left:42px;top:37.4px" width="16" height="16"><rect x="1.5" y="6.5" width="10" height="8" rx="1" fill="#fff" stroke="#8c8c8c" stroke-width="1.2"/><circle cx="10.6" cy="6.3" r="5" fill="none" stroke="#8c8c8c" stroke-width="1.2"/></svg>
<div class="t" style="left:64px;top:57.2px;color:#333333;font-weight:normal;font-size:14.5px">Extrude</div>
<svg class="ic" style="left:26px;top:54.7px" width="36" height="20"><defs><linearGradient id="sl3" x1="0" y1="0" x2="1" y2="0"><stop offset="0" stop-color="#6f8fe0"/><stop offset="0.3" stop-color="#a9c2f5"/><stop offset="1" stop-color="#4a6ccc"/></linearGradient></defs><path d="M2.8 7.8V14.2L8.3 11z" fill="#a0a0a0" stroke="#2a2a2a" stroke-width="1.1" stroke-linejoin="round"/><path d="M30 12.5 Q33 14 31 16.5 L29 17z" fill="#555" opacity="0.7"/><path d="M17 11.2 L19.8 9.8 H30 V16 L27.8 17.6 H17z" fill="url(#sl3)"/><path d="M17 11.2 L19.8 9.8 H30 L27.8 11.2z" fill="#3556b8"/><path d="M27.8 11.2V17.6L30 16V9.8z" fill="#3a5cc0"/><path d="M23.1 3.3 L27.2 7.6 H25 V11 H21.3 V7.6 H19z" fill="#2453c4" stroke="#173c96" stroke-width="0.5"/></svg>
<div class="t" style="left:64px;top:75.9px;color:#333333;font-weight:normal;font-size:14.5px">Extrude001</div>
<svg class="ic" style="left:26px;top:73.4px" width="36" height="20"><defs><linearGradient id="sl4" x1="0" y1="0" x2="1" y2="0"><stop offset="0" stop-color="#6f8fe0"/><stop offset="0.3" stop-color="#a9c2f5"/><stop offset="1" stop-color="#4a6ccc"/></linearGradient></defs><path d="M2.8 7.8V14.2L8.3 11z" fill="#a0a0a0" stroke="#2a2a2a" stroke-width="1.1" stroke-linejoin="round"/><path d="M30 12.5 Q33 14 31 16.5 L29 17z" fill="#555" opacity="0.7"/><path d="M17 11.2 L19.8 9.8 H30 V16 L27.8 17.6 H17z" fill="url(#sl4)"/><path d="M17 11.2 L19.8 9.8 H30 L27.8 11.2z" fill="#3556b8"/><path d="M27.8 11.2V17.6L30 16V9.8z" fill="#3a5cc0"/><path d="M23.1 3.3 L27.2 7.6 H25 V11 H21.3 V7.6 H19z" fill="#2453c4" stroke="#173c96" stroke-width="0.5"/></svg>
<div class="t" style="left:64px;top:94.6px;color:#333333;font-weight:normal;font-size:14.5px">Extrude002</div>
<svg class="ic" style="left:26px;top:92.1px" width="36" height="20"><defs><linearGradient id="sl5" x1="0" y1="0" x2="1" y2="0"><stop offset="0" stop-color="#6f8fe0"/><stop offset="0.3" stop-color="#a9c2f5"/><stop offset="1" stop-color="#4a6ccc"/></linearGradient></defs><path d="M2.8 7.8V14.2L8.3 11z" fill="#a0a0a0" stroke="#2a2a2a" stroke-width="1.1" stroke-linejoin="round"/><path d="M30 12.5 Q33 14 31 16.5 L29 17z" fill="#555" opacity="0.7"/><path d="M17 11.2 L19.8 9.8 H30 V16 L27.8 17.6 H17z" fill="url(#sl5)"/><path d="M17 11.2 L19.8 9.8 H30 L27.8 11.2z" fill="#3556b8"/><path d="M27.8 11.2V17.6L30 16V9.8z" fill="#3a5cc0"/><path d="M23.1 3.3 L27.2 7.6 H25 V11 H21.3 V7.6 H19z" fill="#2453c4" stroke="#173c96" stroke-width="0.5"/></svg>
<div class="t" style="left:64px;top:113.3px;color:#a3a3a3;font-weight:normal;font-size:14.5px">DWire010</div>
<svg class="ic" style="left:42px;top:112.3px" width="16" height="16"><rect x="1.5" y="6.5" width="10" height="8" rx="1" fill="#fff" stroke="#8c8c8c" stroke-width="1.2"/><circle cx="10.6" cy="6.3" r="5" fill="none" stroke="#8c8c8c" stroke-width="1.2"/></svg>
<div class="t" style="left:64px;top:132.0px;color:#a3a3a3;font-weight:normal;font-size:14.5px">DWire011</div>
<svg class="ic" style="left:42px;top:131.0px" width="16" height="16"><rect x="1.5" y="6.5" width="10" height="8" rx="1" fill="#fff" stroke="#8c8c8c" stroke-width="1.2"/><circle cx="10.6" cy="6.3" r="5" fill="none" stroke="#8c8c8c" stroke-width="1.2"/></svg>
<div class="t" style="left:64px;top:150.8px;color:#a3a3a3;font-weight:normal;font-size:14.5px">DWire012</div>
<svg class="ic" style="left:42px;top:149.8px" width="16" height="16"><rect x="1.5" y="6.5" width="10" height="8" rx="1" fill="#fff" stroke="#8c8c8c" stroke-width="1.2"/><circle cx="10.6" cy="6.3" r="5" fill="none" stroke="#8c8c8c" stroke-width="1.2"/></svg>
<div class="t" style="left:64px;top:169.5px;color:#333333;font-weight:normal;font-size:14.5px">Extrude003</div>
<svg class="ic" style="left:26px;top:167.0px" width="36" height="20"><defs><linearGradient id="sl9" x1="0" y1="0" x2="1" y2="0"><stop offset="0" stop-color="#6f8fe0"/><stop offset="0.3" stop-color="#a9c2f5"/><stop offset="1" stop-color="#4a6ccc"/></linearGradient></defs><path d="M2.8 7.8V14.2L8.3 11z" fill="#a0a0a0" stroke="#2a2a2a" stroke-width="1.1" stroke-linejoin="round"/><path d="M30 12.5 Q33 14 31 16.5 L29 17z" fill="#555" opacity="0.7"/><path d="M17 11.2 L19.8 9.8 H30 V16 L27.8 17.6 H17z" fill="url(#sl9)"/><path d="M17 11.2 L19.8 9.8 H30 L27.8 11.2z" fill="#3556b8"/><path d="M27.8 11.2V17.6L30 16V9.8z" fill="#3a5cc0"/><path d="M23.1 3.3 L27.2 7.6 H25 V11 H21.3 V7.6 H19z" fill="#2453c4" stroke="#173c96" stroke-width="0.5"/></svg>
<div class="t" style="left:64px;top:188.2px;color:#111111;font-weight:bold;font-size:14.5px">DWire014</div>
<svg class="ic" style="left:42px;top:187.2px" width="16" height="16"><rect x="1.5" y="6.5" width="10" height="8" rx="1" fill="#fff" stroke="#2a2ae8" stroke-width="1.2"/><circle cx="10.6" cy="6.3" r="5" fill="none" stroke="#2a2ae8" stroke-width="1.2"/></svg>
</div>
<!-- scrollbar -->
<div class="a" style="left:283px;top:162px;width:13px;height:223px;border:1px solid #bcb8b2;border-radius:7px;background:#dfdedb"></div>
<div class="a" style="left:284px;top:163px;width:11px;height:14px;border-radius:6px 6px 0 0;background:#fafaf9;border-bottom:1px solid #cfcbc6"></div>
<div class="a" style="left:284px;top:369px;width:11px;height:15px;border-radius:0 0 6px 6px;background:#fafaf9;border-top:1px solid #cfcbc6"></div>
<svg class="ic" style="left:283px;top:162px" width="14" height="222"><path d="M4 11h5l-2.5-3z" fill="#555"/><path d="M4 213.5h5l-2.5 3z" fill="#555"/></svg>
<div class="a" style="left:284px;top:254px;width:11px;height:108px;border:1px solid #bfbbb5;border-radius:6px;background:linear-gradient(90deg,#f7f7f6,#fdfdfd 50%,#f0efed)"></div>
<svg class="ic" style="left:284px;top:303px" width="11" height="9"><path d="M3.5 1.5h4M3.5 4.5h4M3.5 7.5h4" stroke="#9c9893" stroke-width="1"/></svg>
<svg class="ic" style="left:143px;top:386px" width="12" height="7"><path d="M2.5 1v5M5.5 1v5M8.5 1v5" stroke="#c2beb9"/></svg>
<svg class="ic" style="left:298px;top:377px" width="6" height="11"><path d="M1 2.5h4M1 5.5h4M1 8.5h4" stroke="#c8c4bf"/></svg>
<!-- property -->
<div class="a" style="left:1px;top:392px;width:296px;height:236px;border:1px solid #bdb9b3;border-radius:3px;background:#fbfbfb"></div>
<div class="a" style="left:3px;top:394px;width:292px;height:232px;border:1px solid #c6c2bc;background:#fff"></div>
<div class="a" style="left:4px;top:395px;width:290px;height:25px;background:linear-gradient(#fbfbfa,#efeeec);border-bottom:2px solid #cdc9c4"></div>
<div class="a" style="left:102px;top:395px;width:1px;height:23px;background:#d9d6d2"></div>
<div class="t" style="left:7px;top:399px;font-size:15px">Property</div>
<div class="t" style="left:106.5px;top:400px;font-size:14.8px">Value</div>
<!-- bottom tabs -->
<svg class="ic" style="left:0;top:625px" width="100" height="33"><path d="M50.5 3.5 L57.5 26 Q58.8 29.5 62.5 29.5 H84 Q87.8 29.5 89 26 L95.5 3.5" fill="#ecebe9" stroke="#77736d" stroke-width="0.9"/><path d="M0.8 2.5 L8.5 26.5 Q9.8 30.5 13.5 30.5 H36.5 Q40.3 30.5 41.5 26.5 L49.5 2.5" fill="#fcfcfc" stroke="#77736d" stroke-width="0.9"/></svg>
<div class="t" style="left:9.5px;top:633.5px;font-size:14.6px">View</div>
<div class="t" style="left:58px;top:633px;font-size:14.6px">Data</div>

<!-- viewport -->
<div class="a" style="left:303px;top:105px;width:869px;height:522px;background:#fff"></div><div class="a" style="left:304px;top:106px;width:867px;height:1px;background:#a8a8c0"></div>
<svg class="a" id="vp" width="867" height="519" viewBox="304 107 867 519">
<defs><linearGradient id="bg" x1="0" y1="0" x2="0" y2="1"><stop offset="0" stop-color="#343469"/><stop offset="1" stop-color="#9898b0"/></linearGradient></defs>
<rect x="304" y="107" width="867" height="519" fill="url(#bg)"/>
<defs><linearGradient id="gm" gradientUnits="userSpaceOnUse" x1="0" y1="107" x2="0" y2="626"><stop offset="0" stop-color="#1c1c38" stop-opacity="0.12"/><stop offset="0.45" stop-color="#1c1c38" stop-opacity="0.21"/><stop offset="1" stop-color="#1c1c38" stop-opacity="0.25"/></linearGradient><linearGradient id="gM" gradientUnits="userSpaceOnUse" x1="0" y1="107" x2="0" y2="626"><stop offset="0" stop-color="#18182c" stop-opacity="0.3"/><stop offset="0.45" stop-color="#18182c" stop-opacity="0.42"/><stop offset="1" stop-color="#18182c" stop-opacity="0.47"/></linearGradient></defs><path d="M315.5 107.0L43.0 626.0M333.7 107.0L61.2 626.0M351.9 107.0L79.4 626.0M370.1 107.0L97.7 626.0M388.4 107.0L115.9 626.0M424.8 107.0L152.4 626.0M443.1 107.0L170.6 626.0M461.3 107.0L188.8 626.0M479.5 107.0L207.0 626.0M497.8 107.0L225.3 626.0M516.0 107.0L243.5 626.0M534.2 107.0L261.7 626.0M552.4 107.0L280.0 626.0M570.7 107.0L298.2 626.0M607.1 107.0L334.7 626.0M625.4 107.0L352.9 626.0M643.6 107.0L371.1 626.0M661.8 107.0L389.3 626.0M680.1 107.0L407.6 626.0M698.3 107.0L425.8 626.0M716.5 107.0L444.0 626.0M734.7 107.0L462.3 626.0M753.0 107.0L480.5 626.0M789.4 107.0L517.0 626.0M807.7 107.0L535.2 626.0M825.9 107.0L553.4 626.0M844.1 107.0L571.6 626.0M862.4 107.0L589.9 626.0M880.6 107.0L608.1 626.0M898.8 107.0L626.3 626.0M917.0 107.0L644.6 626.0M935.3 107.0L662.8 626.0M971.7 107.0L699.3 626.0M990.0 107.0L717.5 626.0M1008.2 107.0L735.7 626.0M1026.4 107.0L753.9 626.0M1044.7 107.0L772.2 626.0M1062.9 107.0L790.4 626.0M1081.1 107.0L808.6 626.0M1099.3 107.0L826.9 626.0M1117.6 107.0L845.1 626.0M1154.0 107.0L881.6 626.0M1172.3 107.0L899.8 626.0M1190.5 107.0L918.0 626.0M1208.7 107.0L936.2 626.0M1227.0 107.0L954.5 626.0M1245.2 107.0L972.7 626.0M1263.4 107.0L990.9 626.0M1281.6 107.0L1009.2 626.0M1299.9 107.0L1027.4 626.0M1336.3 107.0L1063.9 626.0M1354.6 107.0L1082.1 626.0M1372.8 107.0L1100.3 626.0M1391.0 107.0L1118.5 626.0M1409.2 107.0L1136.8 626.0M1427.5 107.0L1155.0 626.0M1445.7 107.0L1173.2 626.0M304.0 16.9L1171.0 108.8M304.0 26.3L1171.0 118.2M304.0 35.7L1171.0 127.6M304.0 45.1L1171.0 137.1M304.0 54.6L1171.0 146.5M304.0 64.0L1171.0 155.9M304.0 82.9L1171.0 174.8M304.0 92.3L1171.0 184.2M304.0 101.7L1171.0 193.6M304.0 111.2L1171.0 203.1M304.0 120.6L1171.0 212.5M304.0 130.0L1171.0 221.9M304.0 139.4L1171.0 231.3M304.0 148.9L1171.0 240.8M304.0 158.3L1171.0 250.2M304.0 177.2L1171.0 269.1M304.0 186.6L1171.0 278.5M304.0 196.0L1171.0 287.9M304.0 205.5L1171.0 297.4M304.0 214.9L1171.0 306.8M304.0 224.3L1171.0 316.2M304.0 233.7L1171.0 325.6M304.0 243.2L1171.0 335.1M304.0 252.6L1171.0 344.5M304.0 271.5L1171.0 363.4M304.0 280.9L1171.0 372.8M304.0 290.3L1171.0 382.2M304.0 299.8L1171.0 391.7M304.0 309.2L1171.0 401.1M304.0 318.6L1171.0 410.5M304.0 328.0L1171.0 420.0M304.0 337.5L1171.0 429.4M304.0 346.9L1171.0 438.8M304.0 365.8L1171.0 457.7M304.0 375.2L1171.0 467.1M304.0 384.6L1171.0 476.5M304.0 394.1L1171.0 486.0M304.0 403.5L1171.0 495.4M304.0 412.9L1171.0 504.8M304.0 422.3L1171.0 514.2M304.0 431.8L1171.0 523.7M304.0 441.2L1171.0 533.1M304.0 460.1L1171.0 552.0M304.0 469.5L1171.0 561.4M304.0 478.9L1171.0 570.8M304.0 488.4L1171.0 580.3M304.0 497.8L1171.0 589.7M304.0 507.2L1171.0 599.1M304.0 516.6L1171.0 608.5M304.0 526.1L1171.0 618.0M304.0 535.5L1171.0 627.4M304.0 554.4L1171.0 646.3M304.0 563.8L1171.0 655.7M304.0 573.2L1171.0 665.1M304.0 582.7L1171.0 674.6M304.0 592.1L1171.0 684.0M304.0 601.5L1171.0 693.4M304.0 610.9L1171.0 702.9M304.0 620.4L1171.0 712.3M304.0 629.8L1171.0 721.7" stroke="url(#gm)" stroke-width="1" fill="none"/><path d="M406.6 107.0L134.1 626.0M588.9 107.0L316.4 626.0M771.2 107.0L498.7 626.0M953.5 107.0L681.0 626.0M1135.8 107.0L863.3 626.0M1318.1 107.0L1045.6 626.0M304.0 73.4L1171.0 165.3M304.0 167.7L1171.0 259.6M304.0 262.0L1171.0 353.9M304.0 356.3L1171.0 448.2M304.0 450.6L1171.0 542.5M304.0 544.9L1171.0 636.8" stroke="url(#gM)" stroke-width="1.1" fill="none"/>
<g stroke="#111" stroke-width="2" stroke-linejoin="round">
<polygon points="663.1,146.4 683.6,107 714.5,107 714.5,219.4 668.6,298.6" fill="#0c0b48"/>
<polygon points="491.2,127.7 502.2,107 683.6,107 663.1,146.4" fill="#0a0a8f"/>
<polygon points="491.2,127.7 663.1,146.4 668.6,298.6 497.1,281.2" fill="#0a0ad8"/>
<polygon points="655.9,161.8 664,148.7 741.9,335.2 729.1,340.5" fill="#b9b9b9"/>
<polygon points="664,148.7 815.1,269 741.9,335.2" fill="#8f8f8f"/>
<polygon points="749.4,105 769.7,105 852,215.4 838.4,223.2" fill="#bdbdbd"/>
<polygon points="769.7,105 844.2,105 883,124.8 852,215.4" fill="#666666"/>
<polygon points="302,254.4 308,255.7 412.8,251.8 365.6,391.5 302,367" fill="#878787"/>
<polygon points="302,367 365.6,391.5 302,385.4" fill="#b5b5b5"/>
<polygon points="412.8,251.8 416.7,330.4 395.7,393.3 365.6,391.5" fill="#2d2d2d"/>
<polygon points="302,385.4 490.3,403.3 437.3,501.8 302,485.7" fill="#7b7b7b"/>
<polygon points="302,485.7 437.3,501.8 302,609.3" fill="#b7b7b7"/>
</g>
<polyline points="622.1,389.6 916.7,421 990,523.3 1004.7,496.2" fill="none" stroke="#0a0a0a" stroke-width="2.2" stroke-linejoin="miter"/>
<g stroke-width="2" fill="none">
<path d="M1145.3 599.7L1164.2 602" stroke="#b01818"/><path d="M1158 599.5l6.5 2.5l-6.5 2z" fill="#b01818" stroke="none"/>
<path d="M1145.3 599.7L1144.8 584" stroke="#1a1a9a"/><path d="M1142 590l2.8 -8l2.8 8z" fill="#1a1a9a" stroke="none"/>
<path d="M1145.8 598.5L1149.6 593.6" stroke="#1f9a1f"/>
</g>
<text x="1150.5" y="593" font-family="Liberation Sans" font-size="9" fill="#111">Y</text>
<text x="1165.5" y="603" font-family="Liberation Sans" font-size="9" fill="#111">X</text>

<rect x="304" y="107" width="867" height="1" fill="#15135a"/><rect x="304" y="108" width="867" height="1" fill="#3c3b70" opacity="0.6"/>
</svg>

<!-- doc tab -->
<div class="a" style="left:304px;top:626px;width:212px;height:31px;border:1px solid #c8c4be;border-top:none;border-radius:0 0 3px 3px;background:linear-gradient(#f4f4f3,#fbfbfb)"></div>
<svg class="ic" style="left:310px;top:633px" width="20" height="18"><defs><linearGradient id="fr" x1="0" y1="0" x2="1" y2="1"><stop offset="0" stop-color="#ff7a10"/><stop offset="1" stop-color="#e81808"/></linearGradient></defs><path d="M1.7 2h7.5v3H4.8v2.3h3.8v2.8H4.8V14H1.7z" fill="url(#fr)"/><g transform="translate(10.3,9.7)"><circle r="3.6" fill="#1a3aa0"/><path d="M0-5.3L1.1-3.4 3.3-4.1 3.3-2 5.3 0 3.3 2 3.3 4.1 1.1 3.4 0 5.3-1.1 3.4-3.3 4.1-3.3 2-5.3 0-3.3-2-3.3-4.1-1.1-3.4z" fill="#10309a"/><circle cx="-0.8" cy="-0.8" r="2.6" fill="#3a7ae0" opacity="0.6"/><circle r="1.5" fill="#fff"/></g></svg>
<div class="t" style="left:334px;top:634.5px;font-size:14.3px">F2-T17-ejemplo-ini : 1*</div>
<svg class="ic" style="left:490.6px;top:635px" width="16" height="16"><path d="M3.2 3.2l8.6 8.6M11.8 3.2l-8.6 8.6" stroke="#5e5e5e" stroke-width="3.1" stroke-linecap="square"/></svg>

<!-- right toolbar -->
<div class="a" style="left:1174px;top:118.6px;width:24px;height:23px;border:1px solid #c9c5bf;border-radius:4px;background:linear-gradient(#fbfbfa,#e9e7e4)"></div>
<div class="a" style="left:1174px;top:144.3px;width:24px;height:23px;border:1px solid #c9c5bf;border-radius:4px;background:linear-gradient(#fbfbfa,#e9e7e4)"></div>
<div class="a" style="left:1174px;top:170.0px;width:24px;height:23px;border:1px solid #c9c5bf;border-radius:4px;background:linear-gradient(#fbfbfa,#e9e7e4)"></div>
<div class="a" style="left:1174px;top:195.7px;width:24px;height:23px;border:1px solid #c9c5bf;border-radius:4px;background:linear-gradient(#fbfbfa,#e9e7e4)"></div>
<div class="a" style="left:1174px;top:221.4px;width:24px;height:23px;border:1px solid #c9c5bf;border-radius:4px;background:linear-gradient(#fbfbfa,#e9e7e4)"></div>
<div class="a" style="left:1174px;top:247.1px;width:24px;height:23px;border:1px solid #c9c5bf;border-radius:4px;background:linear-gradient(#fbfbfa,#e9e7e4)"></div>
<div class="a" style="left:1174px;top:272.8px;width:24px;height:23px;border:1px solid #c9c5bf;border-radius:4px;background:linear-gradient(#fbfbfa,#e9e7e4)"></div>
<div class="a" style="left:1174px;top:298.5px;width:24px;height:23px;border:1px solid #c9c5bf;border-radius:4px;background:linear-gradient(#fbfbfa,#e9e7e4)"></div>
<div class="a" style="left:1174px;top:324.2px;width:24px;height:23px;border:1px solid #b2aea8;border-radius:4px;background:linear-gradient(#e2e0dc,#d9d7d3)"></div>
<div class="a" style="left:1174px;top:349.9px;width:24px;height:23px;border:1px solid #c9c5bf;border-radius:4px;background:linear-gradient(#fbfbfa,#e9e7e4)"></div>
<div class="a" style="left:1174px;top:375.6px;width:24px;height:23px;border:1px solid #c9c5bf;border-radius:4px;background:linear-gradient(#fbfbfa,#e9e7e4)"></div>
<div class="a" style="left:1174px;top:401.3px;width:24px;height:23px;border:1px solid #c9c5bf;border-radius:4px;background:linear-gradient(#fbfbfa,#e9e7e4)"></div>
<div class="a" style="left:1174px;top:427.0px;width:24px;height:23px;border:1px solid #c9c5bf;border-radius:4px;background:linear-gradient(#fbfbfa,#e9e7e4)"></div>
<div class="a" style="left:1174px;top:452.7px;width:24px;height:23px;border:1px solid #c9c5bf;border-radius:4px;background:linear-gradient(#fbfbfa,#e9e7e4)"></div>
<svg class="ic" style="left:1172px;top:107px" width="28" height="380" viewBox="1172 107 28 380">
<path d="M1181.5 110v4M1184.5 110v4M1187.5 110v4" stroke="#c4c0bb" stroke-width="1"/>
<path d="M1182.6 129 V125.5 Q1182.6 120.5 1186 120.5 Q1189.4 120.5 1189.4 125.5 V129" fill="none" stroke="#0b3b2e" stroke-width="3.2"/><path d="M1182.6 129 V125.5 Q1182.6 120.5 1186 120.5 Q1189.4 120.5 1189.4 125.5 V129" fill="none" stroke="#17a57c" stroke-width="1.6"/><rect x="1180.5" y="127" width="11" height="8.5" rx="1" fill="#17a57c" stroke="#0b3b2e" stroke-width="0.9"/><path d="M1181.5 130h9M1181.5 132.5h9" stroke="#7ee0c0" stroke-width="0.7"/>
<path d="M1179.5 161.5L1192.5 150.5" stroke="#0b3b2e" stroke-width="3.4" stroke-linecap="round"/><path d="M1179.5 161.5L1192.5 150.5" stroke="#17a57c" stroke-width="2" stroke-linecap="round"/><ellipse cx="1186" cy="156" rx="3.6" ry="3" fill="#17a57c" stroke="#0b3b2e" stroke-width="0.9" transform="rotate(-40 1186 156)"/>
<path d="M1186 175L1186 185.5" stroke="#0b3b2e" stroke-width="3.6" stroke-linecap="round"/><path d="M1186 175L1186 185.5" stroke="#17a57c" stroke-width="2.2" stroke-linecap="round"/><path d="M1179.5 186L1192.5 186" stroke="#0b3b2e" stroke-width="3.6" stroke-linecap="round"/><path d="M1179.5 186L1192.5 186" stroke="#17a57c" stroke-width="2.2" stroke-linecap="round"/>
<path d="M1181 200.5 h3 v2 h4 v-2 h3 v3 h2 v4 h-2 v2 v2 h2 v4 h-2 v0 h-3 v-2 h-4 v2 h-3 v-2 h-2 v-4 h2 v-4 h-2 v-4 h2z" fill="#17a57c" stroke="#0b3b2e" stroke-width="0.9" stroke-linejoin="round" transform="translate(0,0)"/><rect x="1183.6" y="205" width="4.8" height="4.8" fill="#f4f3f1" stroke="#0b3b2e" stroke-width="0.8"/>
<path d="M1180.5 227.5L1191.5 238.5" stroke="#0b3b2e" stroke-width="4.0" stroke-linecap="round"/><path d="M1180.5 227.5L1191.5 238.5" stroke="#17a57c" stroke-width="2.6" stroke-linecap="round"/><path d="M1191.5 227.5L1180.5 238.5" stroke="#0b3b2e" stroke-width="4.0" stroke-linecap="round"/><path d="M1191.5 227.5L1180.5 238.5" stroke="#17a57c" stroke-width="2.6" stroke-linecap="round"/>
<path d="M1183 253L1193 258.5" stroke="#0b3b2e" stroke-width="3.6999999999999997" stroke-linecap="round"/><path d="M1183 253L1193 258.5" stroke="#17a57c" stroke-width="2.3" stroke-linecap="round"/><path d="M1179.5 258.5L1189.5 264" stroke="#0b3b2e" stroke-width="3.6999999999999997" stroke-linecap="round"/><path d="M1179.5 258.5L1189.5 264" stroke="#17a57c" stroke-width="2.3" stroke-linecap="round"/>
<path d="M1192 279.5L1183 286.5" stroke="#0b3b2e" stroke-width="3.4" stroke-linecap="round"/><path d="M1192 279.5L1183 286.5" stroke="#17a57c" stroke-width="2" stroke-linecap="round"/><circle cx="1181.8" cy="288" r="2.8" fill="#17a57c" stroke="#0b3b2e" stroke-width="0.8"/>
<path d="M1186 303.5 L1191 309 L1186 314.5 L1181 309z" fill="none" stroke="#0b3b2e" stroke-width="2.2"/><path d="M1186 303.5 L1191 309 L1186 314.5 L1181 309z" fill="none" stroke="#17a57c" stroke-width="1"/><circle cx="1186" cy="303.5" r="2.3" fill="#17a57c" stroke="#0b3b2e" stroke-width="0.8"/><circle cx="1181" cy="309" r="2.3" fill="#17a57c" stroke="#0b3b2e" stroke-width="0.8"/><circle cx="1191" cy="309" r="2.3" fill="#17a57c" stroke="#0b3b2e" stroke-width="0.8"/><circle cx="1186" cy="314.5" r="2.3" fill="#17a57c" stroke="#0b3b2e" stroke-width="0.8"/>
<circle cx="1186" cy="335" r="6.6" fill="none" stroke="#0b3b2e" stroke-width="2.6"/><circle cx="1186" cy="335" r="6.6" fill="none" stroke="#17a57c" stroke-width="1.2"/><circle cx="1186" cy="335" r="3.6" fill="none" stroke="#0b3b2e" stroke-width="1"/><circle cx="1186" cy="335" r="1.6" fill="#0b3b2e"/>
<circle cx="1181" cy="361.5" r="2" fill="#17a57c" stroke="#0b3b2e" stroke-width="0.8"/><circle cx="1186" cy="361.5" r="2" fill="#17a57c" stroke="#0b3b2e" stroke-width="0.8"/><circle cx="1191" cy="361.5" r="2" fill="#17a57c" stroke="#0b3b2e" stroke-width="0.8"/>
<path d="M1180 386L1190 392" stroke="#0b3b2e" stroke-width="3.6" stroke-linecap="round"/><path d="M1180 386L1190 392" stroke="#17a57c" stroke-width="2.2" stroke-linecap="round"/><circle cx="1189.5" cy="382.5" r="1.8" fill="#17a57c" stroke="#0b3b2e" stroke-width="0.8"/>
<path d="M1186 406.5L1186 417.5" stroke="#0b3b2e" stroke-width="3.8" stroke-linecap="round"/><path d="M1186 406.5L1186 417.5" stroke="#17a57c" stroke-width="2.4" stroke-linecap="round"/><path d="M1180.5 412L1191.5 412" stroke="#0b3b2e" stroke-width="3.8" stroke-linecap="round"/><path d="M1180.5 412L1191.5 412" stroke="#17a57c" stroke-width="2.4" stroke-linecap="round"/>
<path d="M1184.5 436 H1192.5 V439 M1184.5 435.5 V443.8 H1187.5" fill="none" stroke="#17a57c" stroke-width="1.6"/><path d="M1184.5 436 H1192.5 V439 M1184.5 435.5 V443.8 H1187.5" fill="none" stroke="#0b3b2e" stroke-width="0.5"/><g fill="#0b3b2e"><rect x="1184" y="431.5" width="1.2" height="3"/><rect x="1186.3" y="433.5" width="1" height="1"/><rect x="1188" y="431.5" width="1.8" height="3"/><rect x="1190.5" y="431.5" width="1.8" height="3"/><rect x="1179.5" y="436.5" width="3" height="1.2"/><rect x="1179.5" y="439" width="3" height="1.8"/><rect x="1179.5" y="441.5" width="3" height="1.8"/></g>
<rect x="1179.5" y="457.5" width="13" height="13" rx="1" fill="#17a57c" stroke="#0b3b2e" stroke-width="1.2"/><circle cx="1183.5" cy="466.5" r="1.4" fill="none" stroke="#0b3b2e" stroke-width="0.9"/>
</svg>

<!-- status bar -->
<div class="a" style="left:0;top:657px;width:1200px;height:1px;background:#d6d3cf"></div>
<div class="a" style="left:0;top:658px;width:1200px;height:1px;background:#ffffff"></div>
<div class="t" style="left:5px;top:665px;font-size:14.4px">Preselected: F2_T17_ejemplo_ini.DWire014.Edge2 (31.315500,-16.164999,0.000000)</div>
<div class="t" style="left:1059px;top:665.5px;font-size:14.3px">48.36 x 28.94 mm</div>
<svg class="ic" style="left:1188px;top:676px" width="12" height="11"><g fill="#c9c6c1"><rect x="9" y="1" width="1.5" height="1.5"/><rect x="6" y="4" width="1.5" height="1.5"/><rect x="9" y="4" width="1.5" height="1.5"/><rect x="3" y="7" width="1.5" height="1.5"/><rect x="6" y="7" width="1.5" height="1.5"/><rect x="9" y="7" width="1.5" height="1.5"/></g></svg>
</body></html>
